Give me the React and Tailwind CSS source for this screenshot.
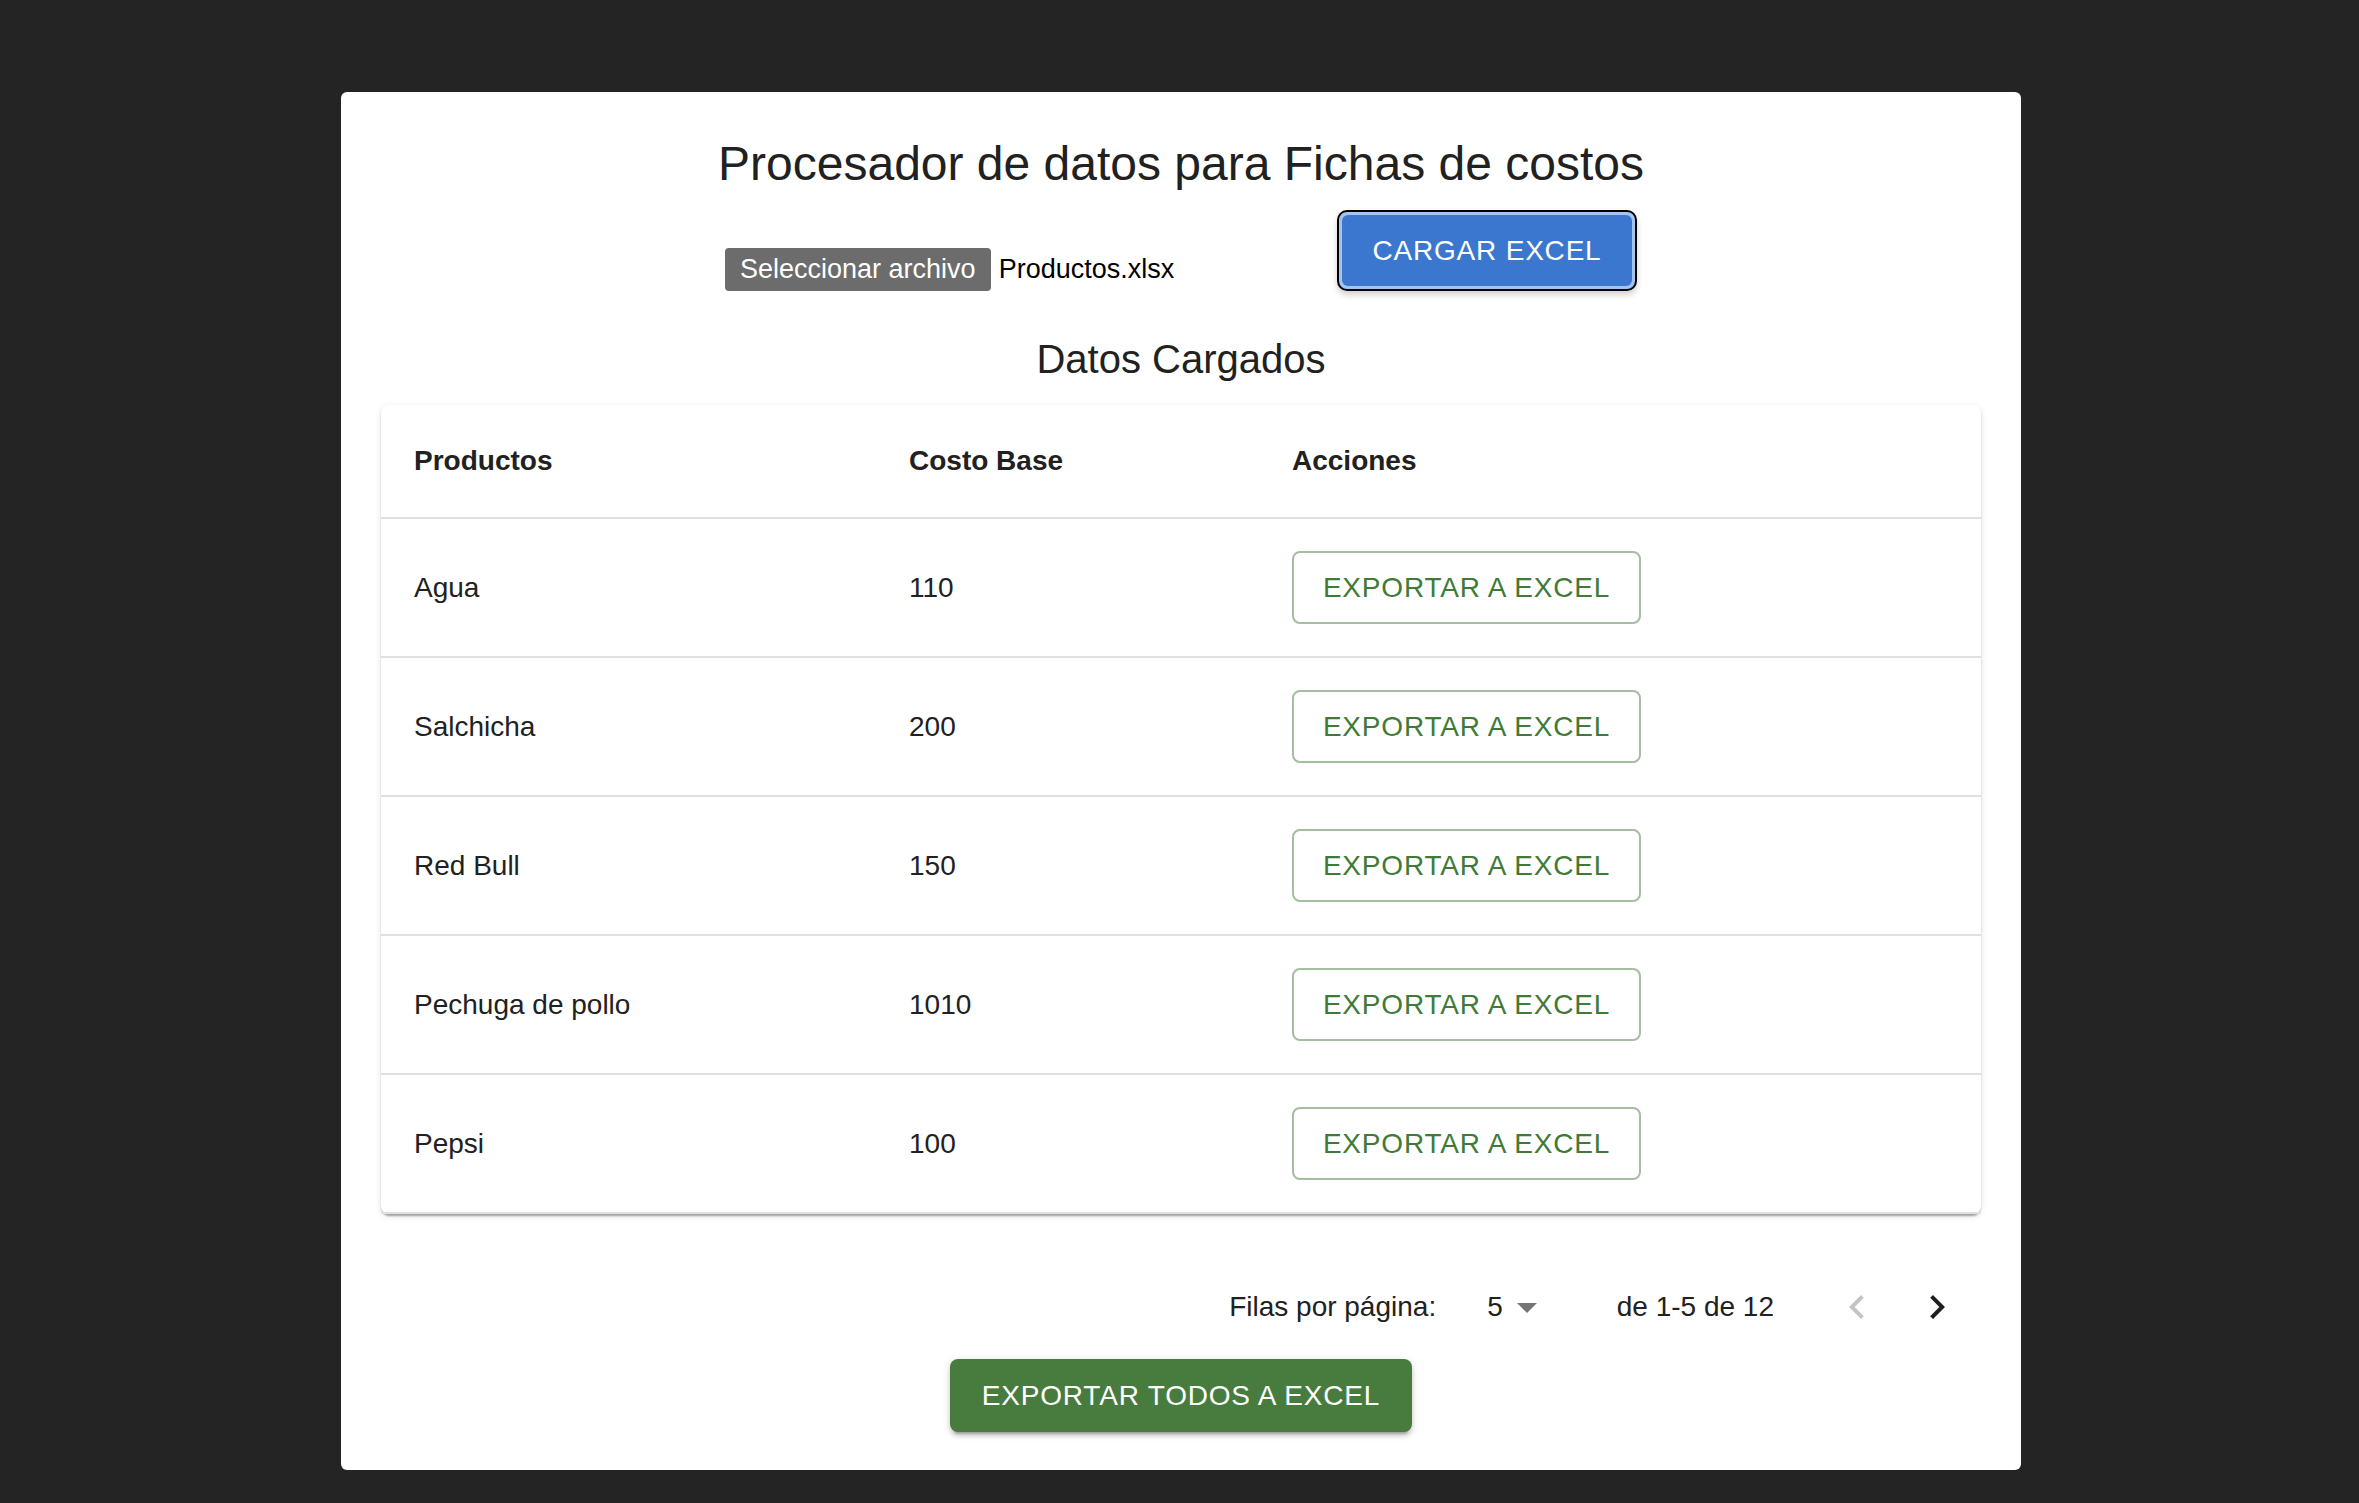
import React from 'react';

const ROWS = [
    { name: 'Agua', cost: 110 },
    { name: 'Salchicha', cost: 200 },
    { name: 'Red Bull', cost: 150 },
    { name: 'Pechuga de pollo', cost: 1010 },
    { name: 'Pepsi', cost: 100 },
];

const ArrowLeft = ({ className }) => (
    <svg viewBox="0 0 24 24" className={className} fill="currentColor">
        <path d="M15.41 16.59 10.83 12l4.58-4.59L14 6l-6 6 6 6z" />
    </svg>
);

const ArrowRight = ({ className }) => (
    <svg viewBox="0 0 24 24" className={className} fill="currentColor">
        <path d="M8.59 16.59 13.17 12 8.59 7.41 10 6l6 6-6 6z" />
    </svg>
);

const ArrowDrop = ({ className }) => (
    <svg viewBox="0 0 24 24" className={className} fill="currentColor">
        <path d="M7 10l5 5 5-5z" />
    </svg>
);

export default function App() {
    return (
        <div className="min-h-screen bg-[#242424] pt-[92px] pb-[33px] font-['Liberation_Sans',Arial,Helvetica,sans-serif] text-[#212121]">
            <div className="ml-[341px] w-[1680px] rounded-md bg-white px-[40px] pt-[42px] pb-[38px] flex flex-col items-center">
                {/* Title */}
                <h1 className="text-[48px] leading-[59px] font-normal text-center">
                    Procesador de datos para Fichas de costos
                </h1>

                {/* File picker + upload */}
                <div className="mt-[17px] flex items-end">
                    <div className="w-[612px] flex items-center gap-[8px]">
                        <span className="h-[43px] px-[15px] flex items-center rounded-[4px] bg-[#6c6c6c] text-white text-[27px]">
                            Seleccionar archivo
                        </span>
                        <span className="text-[27px] text-black">Productos.xlsx</span>
                    </div>
                    <button
                        type="button"
                        className="w-[300px] h-[81px] rounded-[10px] border-2 border-black bg-[#a3c4f3] p-[3px] shadow-[0_4px_6px_rgba(0,0,0,0.18)]"
                    >
                        <span className="flex h-full w-full items-center justify-center rounded-[6px] bg-[#3b77cf] text-white text-[28px] tracking-[0.8px]">
                            CARGAR EXCEL
                        </span>
                    </button>
                </div>

                {/* Section title */}
                <h2 className="mt-[36px] text-[40px] leading-[64px] font-normal">Datos Cargados</h2>

                {/* Table */}
                <div className="mt-[14px] w-full rounded-[8px] bg-white shadow-[0_4px_2px_-2px_rgba(0,0,0,0.2),0_2px_2px_0_rgba(0,0,0,0.14),0_2px_6px_0_rgba(0,0,0,0.12)]">
                    <div className="grid grid-cols-[495px_383px_1fr] h-[114px] items-center border-b-2 border-[#e0e0e0] text-[28px] font-bold">
                        <div className="px-[33px]">Productos</div>
                        <div className="px-[33px]">Costo Base</div>
                        <div className="px-[33px]">Acciones</div>
                    </div>
                    {ROWS.map((row) => (
                        <div
                            key={row.name}
                            className="grid grid-cols-[495px_383px_1fr] h-[139px] items-center border-b-2 border-[#e0e0e0] text-[28px]"
                        >
                            <div className="px-[33px]">{row.name}</div>
                            <div className="px-[33px]">{row.cost}</div>
                            <div className="px-[33px]">
                                <button
                                    type="button"
                                    className="w-[349px] h-[73px] rounded-[8px] border-2 border-[#a4bea0] text-[#3f7b37] text-[28px] tracking-[0.8px]"
                                >
                                    EXPORTAR A EXCEL
                                </button>
                            </div>
                        </div>
                    ))}
                </div>

                {/* Pagination */}
                <div className="mt-[41px] h-[104px] w-full flex items-center justify-end pr-[4px] text-[28px]">
                    <span>Filas por página:</span>
                    <div className="ml-[51px] flex items-center">
                        <span>5</span>
                        <ArrowDrop className="w-[48px] h-[48px] text-[#757575]" />
                    </div>
                    <span className="ml-[66px]">de 1-5 de 12</span>
                    <div className="ml-[43px] flex items-center">
                        <button type="button" className="w-[80px] h-[80px] flex items-center justify-center text-[#c4c4c4]">
                            <ArrowLeft className="w-[48px] h-[48px]" />
                        </button>
                        <button type="button" className="w-[80px] h-[80px] flex items-center justify-center text-[#1f1f1f]">
                            <ArrowRight className="w-[48px] h-[48px]" />
                        </button>
                    </div>
                </div>

                {/* Export all */}
                <button
                    type="button"
                    className="w-[462px] h-[73px] rounded-[8px] bg-[#487c3e] text-white text-[28px] tracking-[0.8px] shadow-[0_6px_2px_-4px_rgba(0,0,0,0.2),0_4px_4px_0_rgba(0,0,0,0.14),0_2px_10px_0_rgba(0,0,0,0.12)]"
                >
                    EXPORTAR TODOS A EXCEL
                </button>
            </div>
        </div>
    );
}
